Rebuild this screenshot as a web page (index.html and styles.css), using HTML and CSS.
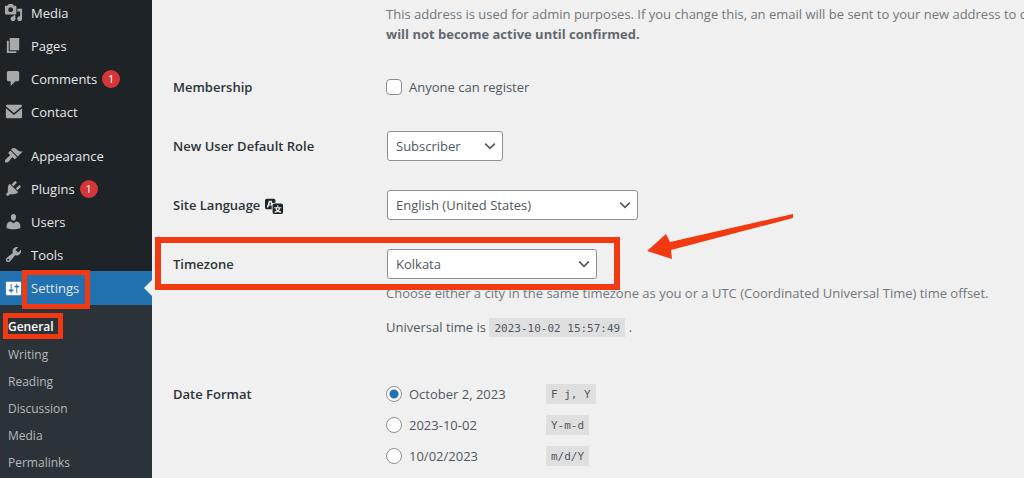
FILE: index.html
```html
<!DOCTYPE html>
<html lang="en">
<head>
    <meta charset="utf-8">
    <title>General Settings</title>
    <link rel="stylesheet" href="styles.css">
</head>
<body>
    <nav class="sidebar">
        <ul class="menu">
            <li><a href="#"><svg viewBox="0 0 20 20"><path d="M13 11V4c0-.55-.45-1-1-1h-1.67L9 1H5L3.67 3H2c-.55 0-1 .45-1 1v7c0 .55.45 1 1 1h10c.55 0 1-.45 1-1zM7 4.5c1.38 0 2.5 1.12 2.5 2.5S8.38 9.5 7 9.5 4.5 8.38 4.5 7 5.62 4.5 7 4.5zM14 6h5v10.5c0 1.38-1.12 2.5-2.5 2.5S14 17.88 14 16.5s1.12-2.5 2.5-2.5c.17 0 .34.02.5.05V9h-3V6zm-4 8.05V13h2v3.5c0 1.38-1.12 2.5-2.5 2.5S7 17.88 7 16.5 8.12 14 9.5 14c.17 0 .34.02.5.05z"/></svg>Media</a></li>
            <li><a href="#"><svg viewBox="0 0 20 20"><path d="M6 15V2h10v13H6zm-1 1h8v2H3V5h2v11z"/></svg>Pages</a></li>
            <li><a href="#"><svg viewBox="0 0 20 20"><path d="M5 2h9c1.1 0 2 .9 2 2v7c0 1.1-.9 2-2 2h-2l-5 5v-5H5c-1.1 0-2-.9-2-2V4c0-1.1.9-2 2-2z"/></svg>Comments<span class="count">1</span></a></li>
            <li><a href="#"><svg viewBox="0 0 20 20"><path d="M3 3h15c.6 0 1 .4 1 1v.4l-8.500 7.200L2 4.400V4c0-.6.400-1 1-1zM2 6.700l8.500 7.100L19 6.700V16c0 .6-.4 1-1 1H3c-.6 0-1-.4-1-1z"/></svg>Contact</a></li>
            <li class="section"><a href="#"><svg viewBox="0 0 20 20"><path d="M14.480 11.060L7.410 3.990l1.500-1.500c.5-.56 2.300-.47 3.510.32 1.210.8 1.430 1.280 2.910 2.100 1.180.64 2.450 1.260 4.450.85zm-.71.71L6.700 4.700 4.930 6.470c-.39.39-.39 1.020 0 1.410l1.060 1.060c.39.39.39 1.030 0 1.420-.6.6-1.430 1.110-2.210 1.690-.35.26-.7.53-1.010.84C1.430 14.230.4 16.080 1.400 17.070c.99 1 2.840-.03 4.180-1.360.31-.31.58-.66.85-1.020.57-.78 1.080-1.610 1.690-2.210.39-.39 1.020-.39 1.410 0l1.060 1.060c.39.39 1.020.39 1.410 0z"/></svg>Appearance</a></li>
            <li><a href="#"><svg viewBox="0 0 20 20"><path d="M13.110 4.360L9.870 7.600 8 5.730l3.240-3.240c.35-.34 1.050-.2 1.560.32.52.51.66 1.210.31 1.550zm-8 1.770l.91-1.120 9.010 9.010-1.190.84c-.71.71-2.630 1.160-3.820 1.160H6.140L4.900 17.260c-.59.59-1.540.59-2.120 0-.59-.58-.59-1.530 0-2.120l1.240-1.240v-3.880c0-1.130.4-3.190 1.090-3.890zm7.260 3.970l3.240-3.240c.34-.35 1.040-.21 1.550.31.52.51.66 1.210.31 1.550l-3.240 3.250z"/></svg>Plugins<span class="count">1</span></a></li>
            <li><a href="#"><svg viewBox="0 0 20 20"><path d="M10 9.250c-2.270 0-2.730-3.440-2.730-3.440C7 4.020 7.820 2 9.970 2c2.160 0 2.980 2.020 2.710 3.810 0 0-.41 3.440-2.680 3.440zm0 2.570L12.720 10c2.390 0 4.520 2.330 4.520 4.530v2.490s-3.650 1.130-7.240 1.130c-3.650 0-7.240-1.130-7.240-1.130v-2.490c0-2.250 1.940-4.480 4.470-4.480z"/></svg>Users</a></li>
            <li><a href="#"><svg viewBox="0 0 20 20"><path d="M16.680 9.770c-1.340 1.340-3.300 1.670-4.950.99l-5.410 6.520c-.99.99-2.590.99-3.580 0s-.99-2.590 0-3.570l6.520-5.420c-.68-1.650-.35-3.610.99-4.950 1.280-1.280 3.120-1.620 4.720-1.060l-2.890 2.890 2.820 2.820 2.860-2.870c.53 1.580.18 3.390-1.080 4.650zM3.810 16.210c.4.39 1.040.39 1.430 0 .4-.4.4-1.040 0-1.430-.39-.4-1.030-.4-1.430 0-.39.39-.39 1.030 0 1.430z"/></svg>Tools</a></li>
            <li class="current"><a href="#"><svg viewBox="0 0 20 20"><path d="M18 16V4c0-.55-.45-1-1-1H3c-.55 0-1 .45-1 1v12c0 .55.45 1 1 1h14c.55 0 1-.45 1-1zM8 11h1c.55 0 1 .45 1 1s-.45 1-1 1H8v1.500c0 .28-.22.5-.5.5s-.5-.22-.5-.5V13H6c-.55 0-1-.45-1-1s.45-1 1-1h1V5.500c0-.28.22-.5.5-.5s.5.22.5.5V11zm5-2h-1c-.55 0-1-.45-1-1s.45-1 1-1h1V5.500c0-.28.22-.5.5-.5s.5.22.5.5V7h1c.55 0 1 .45 1 1s-.45 1-1 1h-1v5.500c0 .28-.22.5-.5.5s-.5-.22-.5-.5V9z"/></svg>Settings</a><span class="mark mark-settings"></span></li>
        </ul>
        <ul class="submenu">
            <li class="active"><a href="#">General</a><span class="mark mark-general"></span></li>
            <li><a href="#">Writing</a></li>
            <li><a href="#">Reading</a></li>
            <li><a href="#">Discussion</a></li>
            <li><a href="#">Media</a></li>
            <li><a href="#">Permalinks</a></li>
        </ul>
    </nav>

    <main class="content">
        <form>
            <p class="description email-note">This address is used for admin purposes. If you change this, an email will be sent to your new address to confirm it.<br><strong>will not become active until confirmed.</strong></p>

            <div class="row">
                <span class="title">Membership</span>
                <label class="option"><input type="checkbox" id="register">Anyone can register</label>
            </div>

            <div class="row">
                <label class="title" for="role">New User Default Role</label>
                <div class="select select-role">
                    <select id="role"><option>Subscriber</option></select>
                    <svg viewBox="0 0 20 20"><path d="M4 7l6 6 6-6"/></svg>
                </div>
            </div>

            <div class="row">
                <label class="title" for="language">Site Language <svg class="translate" viewBox="0 0 20 20"><path d="M11 7H9.490c-.63 0-1.250.3-1.590.7L7 5H4.130l-2.390 7h1.690l.74-2H7v4H2c-1.100 0-2-.9-2-2V5c0-1.100.9-2 2-2h7c1.100 0 2 .9 2 2v2zM6.510 9H4.490l1-2.930zM10 8h7c1.100 0 2 .9 2 2v7c0 1.100-.9 2-2 2h-7c-1.100 0-2-.9-2-2v-7c0-1.100.9-2 2-2zm7.250 5v-1.080h-3.170V9.750h-1.160v2.170H9.750V13h1.280c.11.85.56 1.850 1.280 2.620-.87.36-1.890.62-2.310.62-.01.02.22.97.2 1.460.84 0 2.210-.5 3.280-1.150 1.090.65 2.480 1.150 3.340 1.150-.02-.49.2-1.440.2-1.460-.43 0-1.490-.27-2.380-.63.7-.77 1.140-1.770 1.250-2.610h1.360zm-3.810 1.930c-.5-.46-.85-1.130-1.010-1.930h2.090c-.17.8-.51 1.470-1 1.930l-.04.03s-.03-.02-.04-.03z"/></svg></label>
                <div class="select select-language">
                    <select id="language"><option>English (United States)</option></select>
                    <svg viewBox="0 0 20 20"><path d="M4 7l6 6 6-6"/></svg>
                </div>
            </div>

            <div class="row timezone">
                <label class="title" for="timezone">Timezone</label>
                <div class="select select-timezone">
                    <select id="timezone"><option>Kolkata</option></select>
                    <svg viewBox="0 0 20 20"><path d="M4 7l6 6 6-6"/></svg>
                </div>
                <span class="mark mark-timezone"></span>
                <svg class="arrow" viewBox="0 0 148 46"><path d="M147 0L24 28 20 20 1 37l25 8-1-9L147 4z"/></svg>
            </div>
            <div class="notes">
                <p class="description">Choose either a city in the same timezone as you or a UTC (Coordinated Universal Time) time offset.</p>
                <p>Universal time is <code>2023-10-02 15:57:49</code> .</p>
            </div>

            <div class="row dates">
                <span class="title">Date Format</span>
                <div class="formats">
                    <label class="option"><input type="radio" name="date" checked><span>October 2, 2023</span><code>F j, Y</code></label>
                    <label class="option"><input type="radio" name="date"><span>2023-10-02</span><code>Y-m-d</code></label>
                    <label class="option"><input type="radio" name="date"><span>10/02/2023</span><code>m/d/Y</code></label>
                </div>
            </div>
        </form>
    </main>
</body>
</html>
```

FILE: styles.css
```css
* {
    box-sizing: border-box;
}
body {
    margin: 0;
    display: flex;
    height: 100vh;
    overflow: hidden;
    background: #f0f0f0;
    color: #50575e;
    font-family: "Open Sans", "Noto Sans", sans-serif;
    font-size: 13px;
    line-height: 20px;
}
ul {
    list-style: none;
    margin: 0;
    padding: 0;
}
p {
    margin: 0;
}

/* sidebar */
.sidebar {
    flex: 0 0 152px;
    background: #1d2327;
    display: flex;
    flex-direction: column;
}
.menu {
    margin-top: -4px;
}
.menu a {
    display: flex;
    align-items: center;
    height: 33px;
    padding-left: 4px;
    color: #e6e7e8;
    text-decoration: none;
}
.menu svg {
    width: 19px;
    height: 19px;
    margin-right: 8px;
    fill: #a7aaad;
}
.menu .section {
    margin-top: 11px;
}
.count {
    width: 18px;
    height: 18px;
    margin-left: 5px;
    border-radius: 50%;
    background: #d63638;
    color: #fff;
    font-size: 11px;
    line-height: 18px;
    text-align: center;
}
.menu .current {
    position: relative;
    background: #2271b1;
}
.menu .current a {
    height: 34px;
}
.current::after {
    content: "";
    position: absolute;
    top: 9px;
    right: 0;
    border: 8px solid transparent;
    border-left: 0;
    border-right-color: #f0f0f0;
}
.current svg {
    fill: #fff;
}
.submenu {
    flex: 1 0 auto;
    padding: 8px 0;
    background: #2c3338;
}
.submenu a {
    display: block;
    padding-left: 8px;
    color: #b5b9bc;
    font-size: 12px;
    line-height: 27px;
    text-decoration: none;
}
.submenu .active {
    position: relative;
}
.submenu .active a {
    color: #fff;
    font-weight: 600;
    line-height: 28px;
}

/* red highlights */
.mark {
    position: absolute;
    border: 5px solid #f23a12;
    pointer-events: none;
}
.mark-settings {
    top: -1px;
    left: 22px;
    width: 68px;
    height: 39px;
}
.mark-general {
    top: 0;
    left: 3px;
    width: 60px;
    height: 26px;
}
.mark-timezone {
    top: -12px;
    left: -18px;
    width: 465px;
    height: 53px;
    border-width: 6px;
}
.arrow {
    position: absolute;
    top: -35px;
    left: 473px;
    width: 148px;
    height: 46px;
    fill: #f23a12;
}

/* settings form */
.content {
    flex: 1;
    min-width: 0;
    overflow: hidden;
    padding: 4px 0 0 21px;
}
.row {
    display: flex;
    align-items: center;
    position: relative;
    min-height: 30px;
    margin-bottom: 29px;
}
.title {
    flex: 0 0 214px;
    color: #2c3338;
    font-weight: 600;
}
.description {
    color: #72777c;
    white-space: nowrap;
}
.description strong {
    color: #646970;
}
.email-note {
    margin: 0 0 28px 213px;
}
.option {
    display: flex;
    align-items: center;
}
.option input {
    appearance: none;
    width: 16px;
    height: 16px;
    margin: 0 7px 0 -1px;
    border: 1px solid #8c8f94;
    border-radius: 4px;
    background: #fff;
}
.option input[type="radio"] {
    border-radius: 50%;
}
.option input[type="radio"]:checked {
    background: radial-gradient(circle, #2271b1 4px, #fff 5px);
}
.select {
    position: relative;
}
.select select {
    appearance: none;
    width: 100%;
    height: 30px;
    padding: 0 24px 0 8px;
    border: 1px solid #8c8f94;
    border-radius: 3px;
    background: #fff;
    color: #50575e;
    font: inherit;
    display: block;
}
.select svg {
    position: absolute;
    top: 7px;
    right: 5px;
    width: 16px;
    height: 16px;
    fill: none;
    stroke: #50575e;
    stroke-width: 2;
    pointer-events: none;
}
.select-role {
    width: 116px;
}
.select-language {
    width: 251px;
}
.select-timezone {
    width: 210px;
}
.translate {
    width: 19px;
    height: 19px;
    margin: -2px 0 0 1px;
    vertical-align: middle;
    fill: #1d2327;
}
.timezone {
    margin-bottom: 4px;
}
.notes {
    display: flex;
    flex-direction: column;
    gap: 14px;
    margin: 0 0 47px 213px;
}
code {
    padding: 4px 5px 2px;
    background: #dfdfe0;
    font-family: "DejaVu Sans Mono", monospace;
    font-size: 11px;
    line-height: 14px;
}
.dates {
    align-items: flex-start;
}
.formats {
    display: flex;
    flex-direction: column;
    gap: 11px;
}
.formats span {
    width: 137px;
}
```
